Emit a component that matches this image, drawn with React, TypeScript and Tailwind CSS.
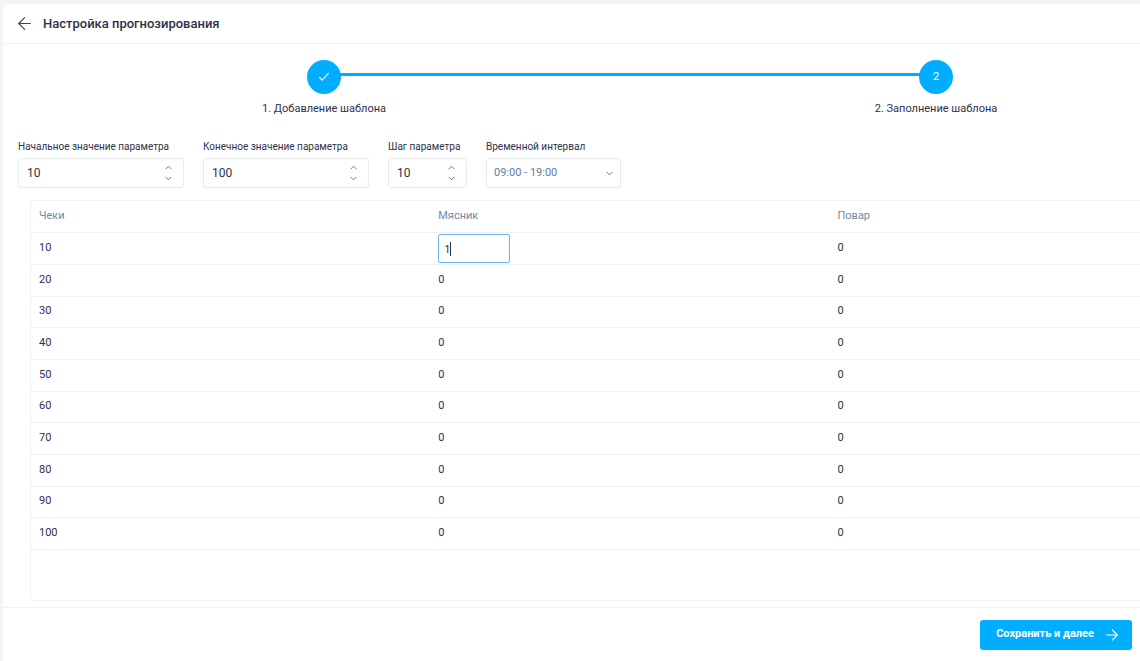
import { useState } from "react"

const steps = [
  { label: "1. Добавление шаблона", done: true },
  { label: "2. Заполнение шаблона", done: false },
]

const rows = [10, 20, 30, 40, 50, 60, 70, 80, 90, 100]

function Chevron({ up = false }: { up?: boolean }) {
  return (
    <svg
      viewBox="0 0 7 5"
      className="h-[5px] w-[7px]"
      fill="none"
      stroke="#5f7f9c"
      strokeWidth="1"
      strokeLinecap="round"
      strokeLinejoin="round"
    >
      <path d={up ? "M1 3.8 3.5 1.2 6 3.8" : "M1 1.2 3.5 3.8 6 1.2"} />
    </svg>
  )
}

function NumberField({
  id,
  label,
  initial,
  step,
  width,
}: {
  id: string
  label: string
  initial: number
  step: number
  width: string
}) {
  const [value, setValue] = useState(initial)

  return (
    <div className={width}>
      <label htmlFor={id} className="block text-[10px] leading-4 whitespace-nowrap">
        {label}
      </label>
      <div className="mt-[3px] flex h-[30px] items-center rounded-[3px] border border-[#e9ebee] bg-white">
        <input
          id={id}
          type="text"
          inputMode="numeric"
          value={value}
          onChange={(e) => setValue(Number(e.target.value) || 0)}
          className="w-full min-w-0 flex-1 bg-transparent pl-2 text-xs outline-none"
        />
        <div className="flex flex-col pr-[7px]">
          <button
            type="button"
            aria-label="Увеличить"
            onClick={() => setValue(value + step)}
            className="flex h-[11px] w-4 items-center justify-center"
          >
            <Chevron up />
          </button>
          <button
            type="button"
            aria-label="Уменьшить"
            onClick={() => setValue(value - step)}
            className="flex h-[11px] w-4 items-center justify-center"
          >
            <Chevron />
          </button>
        </div>
      </div>
    </div>
  )
}

export default function App() {
  const [cell, setCell] = useState("1")

  return (
    <div className="flex min-h-screen flex-col bg-[#f4f5f7] pt-1 pl-[3px] font-[Roboto,sans-serif] text-[#2f3049]">
      <div className="flex flex-1 flex-col rounded-tl bg-white">
        {/* Шапка */}
        <header className="flex h-10 items-center gap-3 border-b border-[#eff0f2] pl-[15px]">
          <button type="button" aria-label="Назад">
            <svg
              viewBox="0 0 13 13"
              className="h-[13px] w-[13px]"
              fill="none"
              stroke="#3f4360"
              strokeWidth="1.1"
              strokeLinecap="round"
              strokeLinejoin="round"
            >
              <path d="M12.4 6.5H.8M6.6.6.7 6.5l5.9 5.9" />
            </svg>
          </button>
          <h1 className="text-[13px] font-medium">Настройка прогнозирования</h1>
        </header>

        {/* Шаги */}
        <ol className="flex pt-4 pr-35 pl-[257px]">
          {steps.map((step, i) => (
            <li key={step.label} className={i === 0 ? "flex flex-1" : "flex"}>
              <div className="flex w-32 shrink-0 flex-col items-center">
                <span className="flex size-[34px] items-center justify-center rounded-full bg-[#00adff] text-[11px] text-white">
                  {step.done ? (
                    <svg
                      viewBox="0 0 12 10"
                      className="h-[10px] w-3"
                      fill="none"
                      stroke="currentColor"
                      strokeWidth="1.2"
                      strokeLinecap="round"
                      strokeLinejoin="round"
                    >
                      <path d="M1.5 5.4 4.2 8.2 10.4 1.4" />
                    </svg>
                  ) : (
                    i + 1
                  )}
                </span>
                <span className="mt-[7px] text-[11px] leading-4 whitespace-nowrap">{step.label}</span>
              </div>
              {i === 0 && <div className="-mx-12 mt-[13px] h-[3px] flex-1 bg-[#00adff]" />}
            </li>
          ))}
        </ol>

        {/* Параметры */}
        <form className="flex gap-[19px] pt-[22px] pl-[15px]">
          <NumberField id="from" label="Начальное значение параметра" initial={10} step={10} width="w-[166px]" />
          <NumberField id="to" label="Конечное значение параметра" initial={100} step={10} width="w-[166px]" />
          <NumberField id="step" label="Шаг параметра" initial={10} step={1} width="w-[79px]" />
          <div className="w-[135px]">
            <label htmlFor="interval" className="block text-[10px] leading-4">
              Временной интервал
            </label>
            <div className="relative mt-[3px]">
              <select
                id="interval"
                className="block h-[30px] w-full appearance-none rounded-[3px] border border-[#e9ebee] bg-white pl-[7px] text-[11px] text-[#5f7f9c] outline-none"
              >
                <option>09:00 - 19:00</option>
              </select>
              <span className="pointer-events-none absolute inset-y-0 right-2 flex items-center">
                <Chevron />
              </span>
            </div>
          </div>
        </form>

        {/* Таблица */}
        <div className="mt-3 mb-[6px] ml-[27px] flex-1 rounded-l-[3px] border border-r-0 border-[#eff0f2]">
          <table className="w-full table-fixed text-left text-[11px]">
            <colgroup>
              <col className="w-[36%]" />
              <col className="w-[36%]" />
              <col />
            </colgroup>
            <thead>
              <tr className="h-[31px] border-b border-[#eff0f2] text-[#7188a3]">
                <th className="px-2 font-normal">Чеки</th>
                <th className="px-2 font-normal">Мясник</th>
                <th className="px-2 font-normal">Повар</th>
              </tr>
            </thead>
            <tbody>
              {rows.map((row, i) => (
                <tr key={row} className="h-8 border-b border-[#eff0f2] nth-[3n]:h-[31px]">
                  <td className="px-2 py-0">{row}</td>
                  <td className="px-2 py-0">
                    {i === 0 ? (
                      <div className="relative w-[72px]">
                        <input
                          aria-label="Мясник, 10"
                          value={cell}
                          onChange={(e) => setCell(e.target.value)}
                          className="block h-[29px] w-full rounded-[2px] border border-[#6fb6e8] bg-white px-[5px] pt-[2px] caret-transparent outline-none"
                        />
                        <span className="pointer-events-none absolute top-2 left-3 h-[14px] w-px bg-[#2f3049]" />
                      </div>
                    ) : (
                      "0"
                    )}
                  </td>
                  <td className="px-2 py-0">0</td>
                </tr>
              ))}
            </tbody>
          </table>
        </div>

        {/* Низ страницы */}
        <footer className="flex h-[54px] items-center justify-end border-t border-[#eff0f2] pr-2">
          <button
            type="button"
            className="flex h-[30px] items-center gap-3 rounded-[3px] bg-[#00adff] pr-[14px] pl-4 text-[11px] font-bold text-white"
          >
            Сохранить и далее
            <svg
              viewBox="0 0 12 12"
              className="size-3"
              fill="none"
              stroke="currentColor"
              strokeWidth="1.1"
              strokeLinecap="round"
              strokeLinejoin="round"
            >
              <path d="M.7 6h10.6M6.2 .9 11.3 6l-5.1 5.1" />
            </svg>
          </button>
        </footer>
      </div>
    </div>
  )
}
